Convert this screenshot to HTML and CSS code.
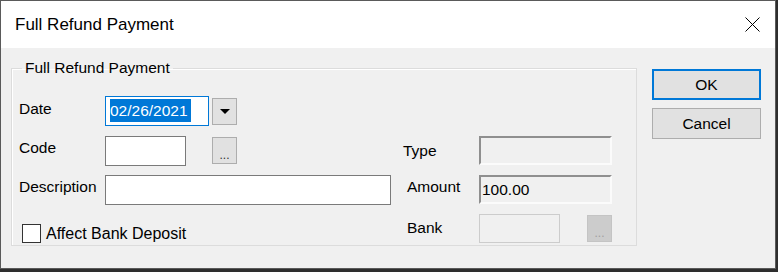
FILE: index.html
```html
<!DOCTYPE html>
<html lang="en">
<head>
    <meta charset="UTF-8">
    <title>Full Refund Payment</title>
    <link rel="stylesheet" href="styles.css">
</head>
<body>

<div class="window">
    <div class="titlebar">
        <span class="title">Full Refund Payment</span>
        <svg class="close" width="15" height="15" viewBox="0 0 15 15">
            <path d="M0.5 0.5 L14.5 14.5 M14.5 0.5 L0.5 14.5" stroke="#000" stroke-width="1" fill="none"/>
        </svg>
    </div>

    <div class="client">
        <fieldset class="group">
            <legend>Full Refund Payment</legend>
            <div class="form">
                <span class="lbl date-lbl">Date</span>
                <div class="field date-field"><span class="sel">02/26/2021</span></div>
                <span class="btn-small drop-btn"><span class="arrow"></span></span>

                <span class="lbl code-lbl">Code</span>
                <div class="field code-field"></div>
                <span class="btn-small code-btn">...</span>

                <span class="lbl rlbl type-lbl">Type</span>
                <div class="field sunken type-field"></div>

                <span class="lbl desc-lbl">Description</span>
                <div class="field desc-field"></div>

                <span class="lbl rlbl amount-lbl">Amount</span>
                <div class="field sunken amount-field">100.00</div>

                <label class="check">
                    <span class="box"></span>
                    <span>Affect Bank Deposit</span>
                </label>

                <span class="lbl rlbl bank-lbl">Bank</span>
                <div class="field flat bank-field"></div>
                <span class="btn-small disabled bank-btn">...</span>
            </div>
        </fieldset>

        <div class="actions">
            <button class="btn default">OK</button>
            <button class="btn">Cancel</button>
        </div>
    </div>
</div>

</body>
</html>
```

FILE: styles.css
```css
body {
    margin: 0;
    background-color: #2e2e2e;
    font-family: "Liberation Sans", Arial, sans-serif;
    color: #000;
}
.window {
    width: 774px;
    height: 267px;
    border: 1px solid #5a5a5a;
    background-color: #f0f0f0;
    display: flex;
    flex-direction: column;
}
.titlebar {
    height: 47px;
    background-color: #fff;
    display: flex;
    align-items: center;
    justify-content: space-between;
    padding: 0 15px 0 14px;
}
.title {
    font-size: 17px;
}
.close {
    display: block;
}
.client {
    display: flex;
    padding: 11px 0 0 10px;
    gap: 15px;
}

/* group box */
.group {
    margin: 0;
    padding: 0;
    width: 624px;
    height: 185px;
    border: 1px solid #dcdcdc;
    box-shadow: inset 1px 1px 0 #fff;
}
.group legend {
    margin-left: 10px;
    padding: 0 3px;
    font-size: 15.5px;
    line-height: 18px;
}
.form {
    display: grid;
    grid-template-columns: 86px 107px 25px 166px 76px 108px 25px;
    grid-template-rows: repeat(4, 29px);
    row-gap: 10px;
    padding: 20px 0 0 7px;
    font-size: 15.5px;
}
.lbl {
    line-height: 18px;
    padding-top: 3px;
}
.rlbl {
    padding-left: 4px;
}
.date-lbl { grid-row: 1; grid-column: 1; padding-top: 3px; }
.code-lbl { grid-row: 2; grid-column: 1; padding-top: 3px; }
.desc-lbl { grid-row: 3; grid-column: 1; }
.type-lbl { grid-row: 2; grid-column: 5; padding-top: 6px; padding-left: 0; }
.amount-lbl { grid-row: 3; grid-column: 5; }
.bank-lbl { grid-row: 4; grid-column: 5; padding-top: 5px; }

.field {
    box-sizing: border-box;
    height: 29px;
    background-color: #fff;
    border: 1px solid #7a7a7a;
    line-height: 25px;
    padding-left: 3px;
}
.date-field {
    grid-row: 1; grid-column: 2;
    width: 104px;
    height: 30px;
    margin-top: -1px;
    border-color: #0078d7;
    padding: 2px 0 0 4px;
    line-height: 23px;
}
.sel {
    display: inline-block;
    background-color: #0078d7;
    color: #fff;
    padding-right: 3px;
}
.code-field { grid-row: 2; grid-column: 2; width: 81px; height: 30px; }
.desc-field { grid-row: 3; grid-column: 2 / 5; width: 286px; height: 30px; }
.sunken {
    background-color: #f0f0f0;
    border-top: 2px solid #8f8f8f;
    border-left: 2px solid #8f8f8f;
    border-right: 2px solid #fbfbfb;
    border-bottom: 2px solid #fbfbfb;
    padding-left: 1px;
    line-height: 25px;
}
.type-field { grid-row: 2; grid-column: 6 / 8; width: 133px; }
.amount-field { grid-row: 3; grid-column: 6 / 8; width: 133px; }
.flat {
    background-color: #f0f0f0;
    border-color: #cccccc;
}
.bank-field { grid-row: 4; grid-column: 6; width: 81px; }

.btn-small {
    box-sizing: border-box;
    width: 25px;
    height: 27px;
    align-self: center;
    background-color: #e1e1e1;
    border: 1px solid #adadad;
    display: flex;
    align-items: center;
    justify-content: center;
    font-size: 12px;
    line-height: 12px;
    padding-top: 8px;
    color: #333;
}
.drop-btn { grid-row: 1; grid-column: 3; padding-top: 0; }
.code-btn { grid-row: 2; grid-column: 3; }
.bank-btn { grid-row: 4; grid-column: 7; }
.btn-small.disabled {
    background-color: #cccccc;
    border-color: #c4c4c4;
    color: #a0a0a0;
}
.arrow {
    width: 0;
    height: 0;
    border-left: 5px solid transparent;
    border-right: 5px solid transparent;
    border-top: 5px solid #000;
}

.check {
    grid-row: 4;
    grid-column: 1 / 5;
    display: flex;
    align-items: flex-end;
    gap: 5px;
    padding-left: 3px;
    font-size: 16px;
    line-height: 18px;
}
.box {
    box-sizing: border-box;
    width: 19px;
    height: 19px;
    border: 1px solid #333;
    background-color: #fff;
}

/* dialog buttons */
.actions {
    display: flex;
    flex-direction: column;
    gap: 8px;
    padding-top: 10px;
}
.btn {
    box-sizing: border-box;
    width: 109px;
    height: 31px;
    font-family: "Liberation Sans", Arial, sans-serif;
    font-size: 15.5px;
    background-color: #e1e1e1;
    border: 1px solid #adadad;
    border-radius: 0;
    padding: 0;
    color: #000;
}
.btn.default {
    border: 2px solid #0078d7;
}
```
